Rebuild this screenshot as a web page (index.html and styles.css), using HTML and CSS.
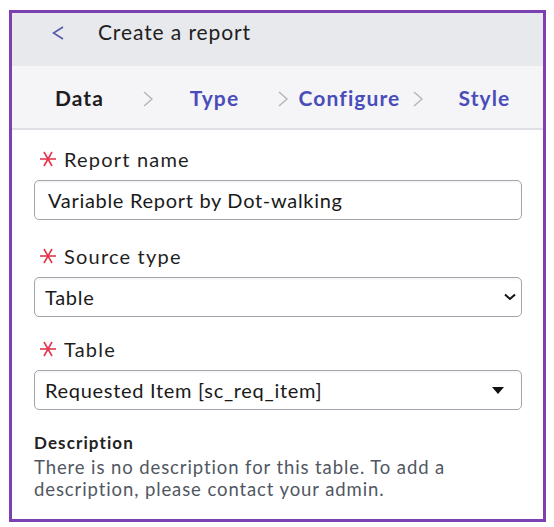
FILE: index.html
```html
<!DOCTYPE html>
<html lang="en">

<head>
    <meta charset="UTF-8">
    <meta name="viewport" content="width=device-width, initial-scale=1.0">
    <title>Create a report</title>
    <link rel="stylesheet" href="styles.css">
</head>

<body>
    <div class="panel">

        <div class="panel-header">
            <button class="back-button" aria-label="Back">
                <svg width="12" height="14" viewBox="0 0 12 14">
                    <polyline points="11,1 1.5,7 11,13" fill="none" stroke="#5558ad" stroke-width="1.6" />
                </svg>
            </button>
            <h1 class="panel-title">Create a report</h1>
        </div>

        <!-- Steps of the wizard -->
        <nav class="steps">
            <a href="#" class="step current">Data</a>
            <a href="#" class="step">Type</a>
            <a href="#" class="step">Configure</a>
            <a href="#" class="step last">Style</a>
        </nav>

        <form class="report-form">
            <div class="field field-name">
                <label class="field-label" for="reportName">
                    <span class="required" aria-hidden="true">
                        <svg width="18" height="18" viewBox="0 0 18 18">
                            <g stroke="#e4364d" stroke-width="1.6">
                                <line x1="1" y1="9" x2="17" y2="9" />
                                <line x1="5" y1="2" x2="13" y2="16" />
                                <line x1="13" y1="2" x2="5" y2="16" />
                            </g>
                        </svg>
                    </span>
                    Report name
                </label>
                <input class="field-input" id="reportName" type="text" value="Variable Report by Dot-walking">
            </div>

            <div class="field field-source">
                <label class="field-label" for="sourceType">
                    <span class="required" aria-hidden="true">
                        <svg width="18" height="18" viewBox="0 0 18 18">
                            <g stroke="#e4364d" stroke-width="1.6">
                                <line x1="1" y1="9" x2="17" y2="9" />
                                <line x1="5" y1="2" x2="13" y2="16" />
                                <line x1="13" y1="2" x2="5" y2="16" />
                            </g>
                        </svg>
                    </span>
                    Source type
                </label>
                <div class="select-wrap">
                    <select class="field-input field-select" id="sourceType">
                        <option>Table</option>
                        <option>Data source</option>
                        <option>Metric base</option>
                    </select>
                    <svg class="select-icon chevron" width="12" height="8" viewBox="0 0 12 8">
                        <polyline points="1,1.5 6,6 11,1.5" fill="none" stroke="#111" stroke-width="2" />
                    </svg>
                </div>
            </div>

            <div class="field field-table">
                <label class="field-label" for="tableName">
                    <span class="required" aria-hidden="true">
                        <svg width="18" height="18" viewBox="0 0 18 18">
                            <g stroke="#e4364d" stroke-width="1.6">
                                <line x1="1" y1="9" x2="17" y2="9" />
                                <line x1="5" y1="2" x2="13" y2="16" />
                                <line x1="13" y1="2" x2="5" y2="16" />
                            </g>
                        </svg>
                    </span>
                    Table
                </label>
                <div class="select-wrap">
                    <select class="field-input field-select" id="tableName">
                        <option>Requested Item [sc_req_item]</option>
                    </select>
                    <svg class="select-icon triangle" width="12" height="7" viewBox="0 0 12 7">
                        <polygon points="0,0 12,0 6,7" fill="#111" />
                    </svg>
                </div>
            </div>

            <div class="description">
                <h2 class="description-title">Description</h2>
                <p class="description-text">There is no description for this table. To add a description, please contact your admin.</p>
            </div>
        </form>

    </div>
</body>

</html>
```

FILE: styles.css
```css
body {
    font-family: Lato, "Noto Sans", Arial, sans-serif;
    margin: 0;
    padding: 10px 0 0 9px;
    background-color: #fff;
    color: #1f1f1f;
}

.panel {
    width: 531px;
    height: 506px;
    border: 3px solid #7b41b3;
    overflow: hidden;
}

/* Barre titre */
.panel-header {
    display: flex;
    align-items: flex-start;
    height: 46px;
    padding-top: 7px;
    background-color: #e8e9ed;
}

.back-button {
    margin: 6px 0 0 40px;
    padding: 0;
    border: none;
    background: none;
    line-height: 0;
    cursor: pointer;
}

.panel-title {
    margin: 0 0 0 34px;
    font-size: 21px;
    font-weight: 400;
    line-height: 24px;
    letter-spacing: 0.9px;
    color: #202020;
}

/* Etapes */
.steps {
    display: grid;
    grid-template-columns: repeat(4, 135px);
    margin: 0;
    padding: 20px 0 0 0;
    height: 42px;
    background-color: #f5f5f8;
    border-bottom: 2px solid #dfe0e5;
}

.step {
    position: relative;
    text-align: center;
    font-size: 21px;
    font-weight: 700;
    line-height: 24px;
    letter-spacing: 1.1px;
    color: #4a4db9;
    text-decoration: none;
}

.step.current {
    color: #1d1d1d;
}

.step::after {
    content: "";
    position: absolute;
    right: -7px;
    top: 5px;
    width: 12px;
    height: 16px;
    background: url("data:image/svg+xml;utf8,<svg xmlns='http://www.w3.org/2000/svg' width='12' height='16' viewBox='0 0 12 16'><polyline points='2,1 10,8 2,15' fill='none' stroke='%23b3b5bc' stroke-width='1.4'/></svg>") no-repeat;
}

.step.last::after {
    display: none;
}

/* Formulaire */
.report-form {
    padding: 17px 21px 0 22px;
}

.field-label {
    display: flex;
    align-items: center;
    gap: 7px;
    margin: 0 0 9px 5px;
    font-size: 20px;
    line-height: 24px;
    letter-spacing: 1.2px;
    color: #1f1f1f;
}

.required {
    line-height: 0;
}

.field-input {
    box-sizing: border-box;
    width: 100%;
    height: 40px;
    margin: 0;
    padding: 0 13px;
    font-family: inherit;
    font-size: 20px;
    letter-spacing: 0.7px;
    color: #1a1a1a;
    background-color: #fff;
    border: 1px solid #a2a5ac;
    border-radius: 5px;
    box-shadow: inset 0 2px 2px rgba(0, 0, 0, 0.04);
}

.field-name {
    margin-bottom: 24px;
}

.field-source {
    margin-bottom: 20px;
}

.field-table {
    margin-bottom: 23px;
}

.select-wrap {
    position: relative;
}

.field-select {
    appearance: none;
    -webkit-appearance: none;
    padding-left: 10px;
}

.select-icon {
    position: absolute;
    pointer-events: none;
}

.chevron {
    right: 6px;
    top: 16px;
}

.triangle {
    right: 18px;
    top: 17px;
}

.description-title {
    margin: 0 0 3px 0;
    font-size: 17px;
    font-weight: 700;
    line-height: 20px;
    letter-spacing: 1.1px;
    color: #222;
}

.description-text {
    margin: 0;
    font-size: 18.5px;
    line-height: 22px;
    letter-spacing: 0.9px;
    color: #515762;
}
```
